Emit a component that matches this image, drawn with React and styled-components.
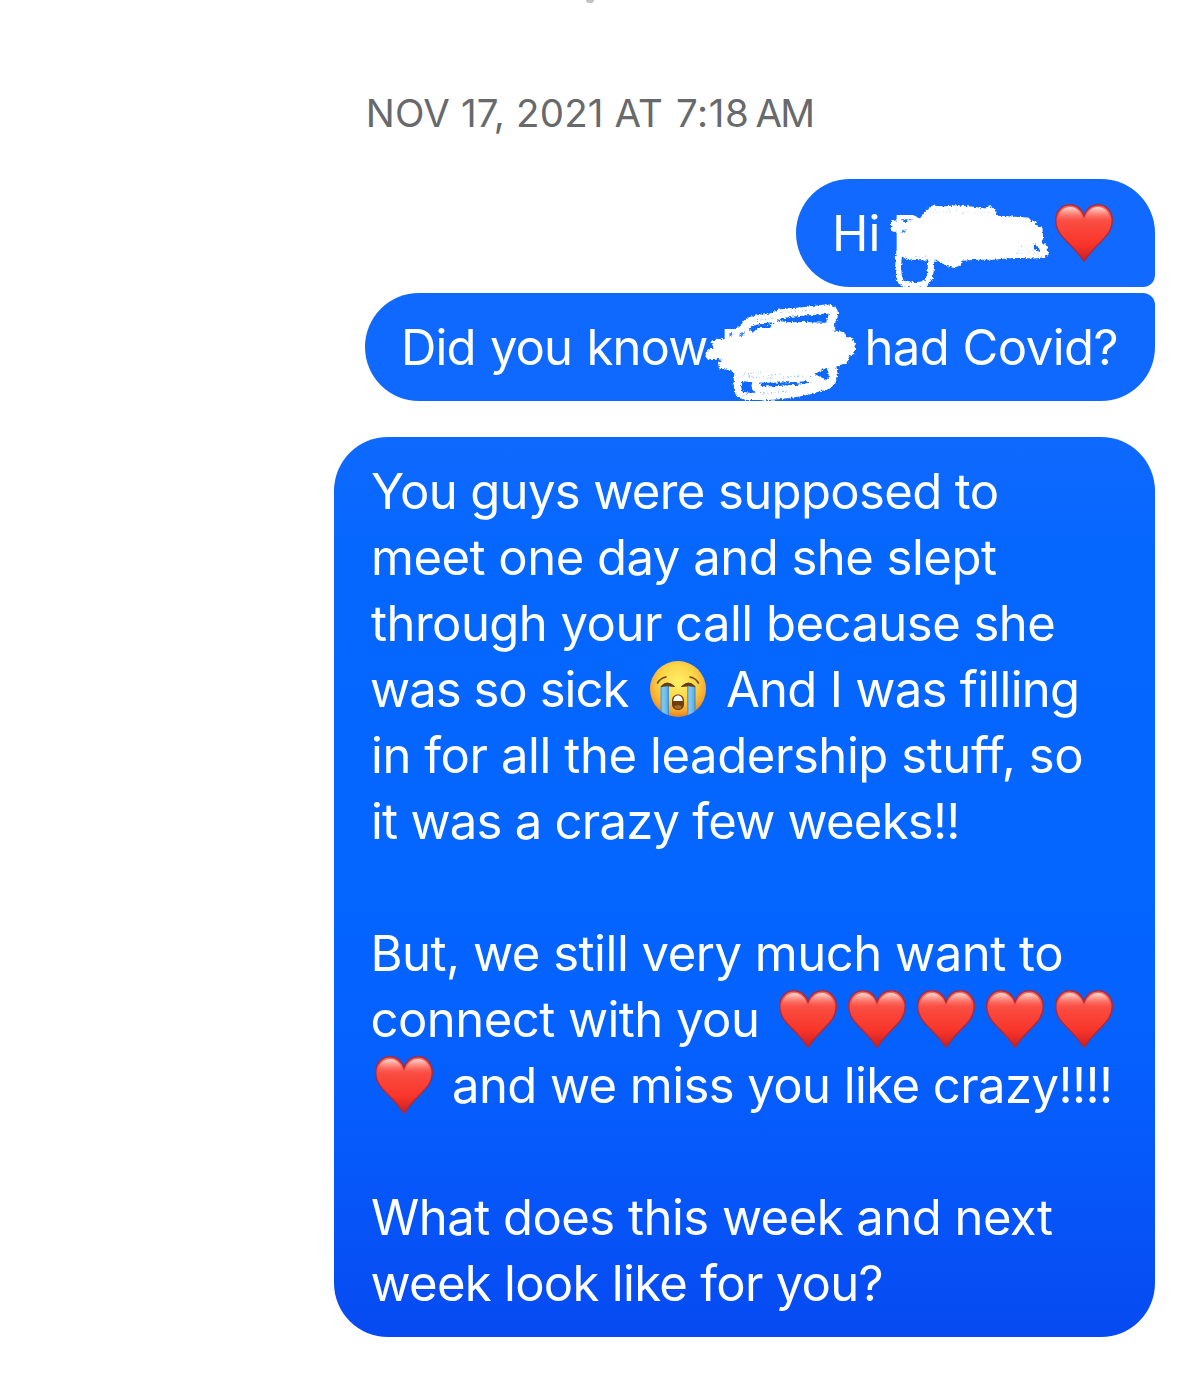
import React from 'react'
import styled, { createGlobalStyle } from 'styled-components'

const GlobalStyle = createGlobalStyle`
  body {
    margin: 0;
    background: #fff;
  }
`

const Thread = styled.main`
  box-sizing: border-box;
  width: 1179px;
  height: 1400px;
  overflow: hidden;
  display: flex;
  flex-direction: column;
  background: #fff;
  font-family: 'Inter', 'Liberation Sans', sans-serif;
`

const PageDot = styled.div`
  align-self: center;
  width: 8px;
  height: 3px;
  border-radius: 0 0 4px 4px;
  background: #c2c2c4;
`

const Timestamp = styled.time`
  display: flex;
  justify-content: center;
  margin-top: 86px;
  font-size: 38.5px;
  line-height: 48px;
  letter-spacing: 0.15px;
  color: #67696b;
  white-space: pre;
`

const Clock = styled.span`
  margin: 0 6px 0 13px;
  letter-spacing: 0.6px;
`

const Meridiem = styled.span`
  letter-spacing: -1.8px;
`

const Messages = styled.section`
  display: flex;
  flex-direction: column;
  align-items: flex-end;
  margin-top: 42px;
  padding-right: 24px;
`

const Bubble = styled.article`
  position: relative;
  box-sizing: border-box;
  width: ${({ width }) => width}px;
  margin-top: ${({ gap = 0 }) => gap}px;
  padding: 22px 37px 20px;
  border-radius: ${({ corners = '54px' }) => corners};
  background: ${({ fill }) => fill};
  color: #fff;
  font-size: 49px;
  line-height: 66px;
`

const Line = styled.div`
  display: flex;
  align-items: center;
  justify-content: ${({ spread }) => (spread ? 'space-between' : 'flex-start')};
  height: 66px;
`

const Text = styled.span`
  white-space: pre;
  letter-spacing: ${({ track = 0 }) => track}px;
  word-spacing: ${({ words = 0 }) => words}px;
  margin-left: ${({ indent = 0 }) => indent}px;
`

const Emoji = styled.svg`
  flex: none;
  display: block;
  width: 58px;
  height: 58px;
  margin-bottom: 2px;
  margin-left: ${({ $before = 4 }) => $before}px;
  margin-right: ${({ $after = 7 }) => $after}px;
`

const Scribble = styled.svg`
  position: absolute;
  left: ${({ $x }) => $x}px;
  top: ${({ $y }) => $y}px;
`

const Defs = styled.svg`
  position: absolute;
  width: 0;
  height: 0;
`

const EmojiDefs = () => (
  <Defs aria-hidden="true">
    <defs>
      <linearGradient id="heartFill" x1="0" y1="0" x2="0" y2="1">
        <stop offset="0" stopColor="#fb665c" />
        <stop offset="0.35" stopColor="#fa493e" />
        <stop offset="0.7" stopColor="#f9352a" />
        <stop offset="1" stopColor="#c91f22" />
      </linearGradient>
      <linearGradient id="heartShine" x1="0" y1="0" x2="0" y2="1">
        <stop offset="0" stopColor="#ffddd4" />
        <stop offset="0.35" stopColor="#ffab9f" stopOpacity="0.8" />
        <stop offset="1" stopColor="#ff6a5e" stopOpacity="0" />
      </linearGradient>
      <radialGradient id="faceFill" cx="0.5" cy="0.38" r="0.64">
        <stop offset="0" stopColor="#fff06a" />
        <stop offset="0.5" stopColor="#fdd548" />
        <stop offset="0.8" stopColor="#f8a92e" />
        <stop offset="1" stopColor="#e07a1c" />
      </radialGradient>
      <linearGradient id="tear" x1="0" y1="0" x2="1" y2="0">
        <stop offset="0" stopColor="#4b9bd6" />
        <stop offset="0.3" stopColor="#86c9ef" />
        <stop offset="0.75" stopColor="#66b4e6" />
        <stop offset="1" stopColor="#3385c7" />
      </linearGradient>
      <clipPath id="faceClip">
        <circle cx="29" cy="29" r="28" />
      </clipPath>
      <filter id="chalk" x="-5%" y="-5%" width="110%" height="110%">
        <feTurbulence type="fractalNoise" baseFrequency="0.16" numOctaves="3" seed="4" result="noise" />
        <feDisplacementMap in="SourceGraphic" in2="noise" scale="13" xChannelSelector="R" yChannelSelector="G" />
      </filter>
    </defs>
  </Defs>
)

const Heart = ({ before, after }) => (
  <Emoji viewBox="0 0 58 58" role="img" aria-label="red heart" $before={before} $after={after}>
    <path
      d="M29 12C26.500 5 21.500 .8 15 .8C6.300 .8 .7 7.800 .7 16.500C.7 26.500 7 32.500 14 39.500C20 45.500 25 51.500 29 57.3C33 51.500 38 45.500 44 39.500C51 32.500 57.3 26.500 57.3 16.500C57.3 7.800 51.700 .8 43 .8C36.500 .8 31.500 5 29 12Z"
      fill="url(#heartFill)"
      stroke="#a92b3e"
      strokeWidth="1.5"
    />
    <path d="M3 16C3.500 8 8.500 3 15 3C21 3 25.500 7 28 14C23 17 9 18 3 16Z" fill="url(#heartShine)" />
    <path d="M55 16C54.500 8 49.500 3 43 3C37 3 32.500 7 30 14C35 17 49 18 55 16Z" fill="url(#heartShine)" />
  </Emoji>
)

const CryingFace = ({ before, after }) => (
  <Emoji viewBox="0 0 58 58" role="img" aria-label="loudly crying face" $before={before} $after={after}>
    <circle cx="29" cy="29" r="28" fill="url(#faceFill)" />
    <g clipPath="url(#faceClip)">
      <path d="M11.500 26H20V56H11.500Z" fill="url(#tear)" />
      <path d="M38 26H46.500V56H38Z" fill="url(#tear)" />
    </g>
    <g fill="none" stroke="#6d4217" strokeLinecap="round">
      <path d="M8.500 23Q11.500 18 17 17" strokeWidth="1.600" />
      <path d="M49.500 23Q46.500 18 41 17" strokeWidth="1.600" />
    </g>
    <path d="M12 26.500Q18 19.500 25.500 26.500Q18 25 12 26.500Z" fill="#5f3a16" stroke="#5f3a16" strokeWidth="1" />
    <path d="M46 26.500Q40 19.500 32.500 26.500Q40 25 46 26.500Z" fill="#5f3a16" stroke="#5f3a16" strokeWidth="1" />
    <path d="M23 40.500C23 37 25.500 34.500 29 34.500C32.500 34.500 35 37 35 40.500V44C35 47.500 33 50 29 50C25 50 23 47.500 23 44Z" fill="#6a3e10" />
    <path d="M24.300 41C24.300 37.500 26.500 35.500 29 35.500C31.500 35.500 33.700 37.500 33.700 41Z" fill="#fff" />
    <path d="M25 46.500Q29 43.500 33 46.500Q32 49 29 49Q26 49 25 46.500Z" fill="#a16a25" />
  </Emoji>
)

// marker stroke over the name in the greeting
const GreetingScribble = () => (
  <Scribble $x={84} $y={11} width="180" height="110" viewBox="0 0 540 330" aria-hidden="true">
    <path d="M50 75H98Q112 78 118 90L70 90V200H50Z" fill="#fff" />
    <g filter="url(#chalk)">
      <path
        d="M36 97L50 94L60 103L90 95L128 82L140 64L156 50L190 53L230 49L280 54L318 59L330 52L346 66L340 80L444 86L450 97L464 98L468 110L484 116L486 146L476 152L494 168L504 190L494 198L462 202L410 200L340 206L290 206L246 209L238 224L220 230L200 224L176 209L140 208L98 206L76 202L64 190L64 122L40 122Z"
        fill="#fff"
        stroke="#fff"
        strokeWidth="7"
        strokeLinejoin="round"
      />
      <path
        d="M58 190C53 222 55 256 61 272C66 287 78 279 96 284C112 286 128 287 139 277C155 264 151 236 154 206"
        fill="none"
        stroke="#fff"
        strokeWidth="18"
        strokeLinecap="round"
      />
      <path d="M462 160L476 172L480 184L462 178Z" fill="#1067ff" />
      <path d="M64 120L76 119L77 128L65 128Z" fill="#3d83fc" />
      <g stroke="#8fb8ff" strokeWidth="2.5" strokeDasharray="2 8">
        <path d="M150 66H270M166 59H230M284 68H332M76 200H138M184 214L230 212M416 183H460M412 190H480M424 170H456" />
      </g>
    </g>
    <path d="M64 89H98" stroke="#5592fd" strokeWidth="4" strokeDasharray="8 3" />
  </Scribble>
)

const NameScribble = () => (
  <Scribble $x={315} $y={-8} width="260" height="125" viewBox="0 0 780 375" aria-hidden="true">
    <path d="M134 132H164V150H148V220H134Z" fill="#fff" />
    <g filter="url(#chalk)">
      <path
        d="M78 205L90 196L104 192L98 172L114 164L144 168L152 142L186 134L206 138L240 128L290 118L340 119L440 126L452 138L490 144L496 158L514 162L524 180L520 204L506 210L500 230L462 244L440 258L396 272L330 280L270 278L200 268L164 262L148 252L120 248L118 234L138 228L112 218L82 220Z"
        fill="#fff"
        stroke="#fff"
        strokeWidth="6"
        strokeLinejoin="round"
      />
      <g fill="none" stroke="#fff" strokeLinecap="round" strokeLinejoin="round">
        <path d="M172 142C190 134 194 126 202 116C210 106 240 104 276 98L300 86C350 84 400 76 440 72C464 72 462 86 458 96C454 106 450 112 452 126" strokeWidth="27" />
        <path d="M276 104C310 124 410 118 446 124" strokeWidth="17" />
        <path d="M174 264C172 282 170 305 176 322C184 338 216 334 250 334" strokeWidth="22" />
        <path d="M454 246C464 270 456 292 436 300C390 316 330 328 248 332" strokeWidth="29" />
        <path d="M228 300C226 320 256 318 300 316C350 314 404 308 420 295C428 284 420 280 390 279" strokeWidth="27" />
        <path d="M188 276C240 284 350 282 398 275" strokeWidth="24" />
      </g>
      <path d="M210 136C220 122 248 119 274 123L270 129L236 129L222 142Z" fill="#1067ff" />
      <path d="M290 104C330 94 390 90 440 88L438 106C390 112 330 114 296 108Z" fill="#1067ff" />
      <path d="M404 267L440 248L446 266L446 286L426 278Z" fill="#1067ff" />
      <path d="M184 300L208 294L216 318L188 322Z" fill="#1067ff" />
      <path d="M276 294L374 290L386 293L350 299L284 301Z" fill="#1067ff" />
      <path d="M148 144H160L150 158ZM180 144L194 140L192 150L178 156Z" fill="#4389fd" />
      <g stroke="#76a8ff" strokeWidth="3" strokeDasharray="3 8">
        <path d="M182 268L248 263M252 273L300 267M206 275L286 281M240 326L320 319M190 330L230 326M300 84L400 74M220 108L280 100M310 276L396 271" />
      </g>
    </g>
  </Scribble>
)

const longFill =
  'linear-gradient(#0f69fe 0%, #0667ff 12%, #0465ff 50%, #0561fe 67%, #0656f9 84%, #064af1 100%)'

export default function App() {
  return (
    <Thread>
      <GlobalStyle />
      <EmojiDefs />
      <PageDot />
      <Timestamp>
        <span>NOV 17, 2021 AT</span>
        <Clock>7:18</Clock>
        <Meridiem>AM</Meridiem>
      </Timestamp>
      <Messages>
        <Bubble width={359} corners="54px 54px 12px 54px" fill="#1169ff">
          <Line spread>
            <Text indent={-1}>Hi</Text>
            <Heart after={5} />
          </Line>
          <GreetingScribble />
        </Bubble>
        <Bubble width={790} gap={6} corners="54px 12px 54px 54px" fill="#0f69ff">
          <Line spread>
            <Text track={-0.9} words={1.5} indent={-1}>Did you know</Text>
            <Text track={-0.54}>had Covid?</Text>
          </Line>
          <NameScribble />
        </Bubble>
        <Bubble width={821} gap={36} fill={longFill}>
          <Line><Text track={-0.62}>You guys were supposed to</Text></Line>
          <Line><Text track={-0.5}>meet one day and she slept</Text></Line>
          <Line><Text track={-0.53}>through your call because she</Text></Line>
          <Line>
            <Text track={-0.95} indent={-1}>was so sick</Text>
            <CryingFace before={20.5} />
            <Text track={-0.7} indent={12}>And I was filling</Text>
          </Line>
          <Line><Text track={-0.42}>in for all the leadership stuff, so</Text></Line>
          <Line><Text track={-0.75}>it was a crazy few weeks!!</Text></Line>
          <Line />
          <Line><Text track={-0.48} indent={-0.5}>But, we still very much want to</Text></Line>
          <Line>
            <Text track={-0.53} indent={-0.5}>connect with you</Text>
            <Heart before={19.5} />
            <Heart />
            <Heart />
            <Heart />
            <Heart after={0} />
          </Line>
          <Line>
            <Heart before={3.5} />
            <Text track={-0.57} indent={12.5}>and we miss you like crazy!!!!</Text>
          </Line>
          <Line />
          <Line><Text track={-0.52}>What does this week and next</Text></Line>
          <Line><Text track={-0.7} indent={-0.5}>week look like for you?</Text></Line>
        </Bubble>
      </Messages>
    </Thread>
  )
}
